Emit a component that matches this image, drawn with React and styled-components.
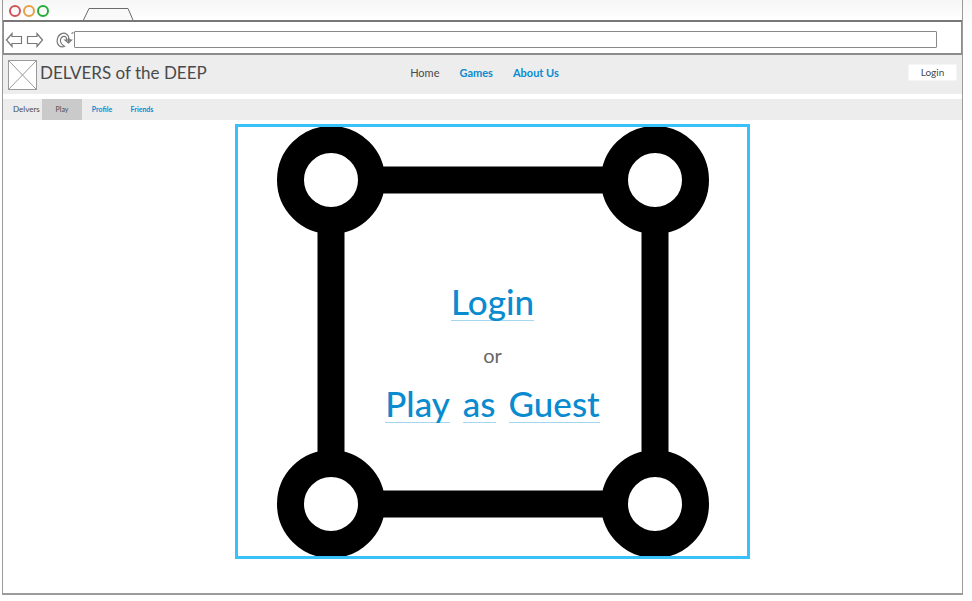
import React from "react";
import styled, { createGlobalStyle } from "styled-components";

const GlobalStyle = createGlobalStyle`
  *, *::before, *::after { box-sizing: border-box; }
  body {
    margin: 0;
    background: linear-gradient(#f7f7f7, #ffffff 28px) no-repeat #ffffff;
    font-family: Lato, "Open Sans", sans-serif;
    color: #4a4a4a;
  }
  button, input { font-family: inherit; color: inherit; }
  a { color: #0a8bd0; text-decoration: none; }
`;

const BrowserFrame = styled.div`
  display: flex;
  flex-direction: column;
  min-height: calc(100vh - 6px);
  margin: 0 9px 6px 2px;
  border: solid #9b9b9b;
  border-width: 0 1px 2px;
  background: #ffffff;
`;

const TabStrip = styled.div`
  display: flex;
  align-items: flex-end;
  justify-content: flex-start;
  gap: 34px;
  height: 22px;
  padding-left: 6px;
  border-bottom: 2px solid #777777;
  background: linear-gradient(#f6f6f6, #ffffff);
`;

const WindowControls = styled.div`
  display: flex;
  gap: 2px;
  padding-bottom: 3px;
`;

const WindowDot = styled.button`
  width: 12px;
  height: 12px;
  padding: 0;
  border: 2px solid ${({ $color }) => $color};
  border-radius: 50%;
  background: transparent;
`;

const TabShape = styled.svg`
  display: block;
  width: 51px;
  height: 13px;
  fill: #f9f9f9;
  stroke: #6b6b6b;
`;

const AddressBar = styled.div`
  display: flex;
  align-items: center;
  height: 33px;
  padding: 4px 24px 0 1px;
  border: solid #8c8c8c;
  border-width: 0 1px 2px;
`;

const ToolButton = styled.button`
  display: flex;
  margin: 0 ${({ $gap }) => $gap || 0}px 0 0;
  padding: 0;
  border: 0;
  background: transparent;

  svg {
    width: 18px;
    height: 16px;
    fill: none;
    stroke: #777777;
    stroke-width: 1.2;
  }
`;

const AddressInput = styled.input`
  flex: 1;
  min-width: 0;
  height: 17px;
  padding: 0 4px;
  border: 1px solid #888888;
  border-radius: 1px;
  background: #ffffff;
  font-size: 11px;
`;

const SiteHeader = styled.header`
  display: grid;
  grid-template-columns: 1fr auto 1fr;
  align-items: center;
  height: 39px;
  padding: 0 5px;
  background: #ededed;
`;

const Brand = styled.div`
  display: flex;
  align-items: center;
  gap: 3px;
`;

const LogoPlaceholder = styled.svg`
  width: 29px;
  height: 30px;
  fill: #ffffff;
  stroke: #9a9a9a;
`;

const SiteTitle = styled.h1`
  margin: 0;
  padding-bottom: 4px;
  font-size: 17px;
  line-height: 20px;
  font-weight: 400;
  white-space: nowrap;
`;

const MainNav = styled.nav`
  display: flex;
  gap: 20px;
  padding: 0 0 4px 4px;
  font-size: 11px;
  line-height: 14px;
`;

const NavLink = styled.a`
  color: ${({ $current }) => ($current ? "#4a4a4a" : "#0a8bd0")};
  font-weight: ${({ $current }) => ($current ? 400 : 700)};
  white-space: nowrap;
`;

const LoginButton = styled.button`
  justify-self: end;
  width: 49px;
  height: 17px;
  margin-bottom: 4px;
  padding: 0 0 2px;
  border: 1px solid #f5f5f5;
  border-radius: 1px;
  background: #ffffff;
  font-size: 10px;
  line-height: 14px;
`;

const SubNav = styled.nav`
  display: flex;
  align-items: stretch;
  height: 21px;
  margin-top: 5px;
  padding-left: 10px;
  background: #ededed;
  line-height: 21px;
`;

const SubNavTitle = styled.span`
  width: 29px;
  font-size: 8px;
  white-space: nowrap;
`;

const SubNavLink = styled.a`
  width: 40px;
  background: ${({ $current }) => ($current ? "#cacaca" : "transparent")};
  color: ${({ $current }) => ($current ? "#4a4a4a" : "#0a8bd0")};
  font-size: 7px;
  font-weight: ${({ $current }) => ($current ? 400 : 700)};
  text-align: center;
`;

const Main = styled.main`
  display: flex;
  justify-content: center;
  padding: 4px 0 20px 20px;
`;

const GamePanel = styled.section`
  display: grid;
  justify-items: center;
  width: 100%;
  max-width: 515px;
  border: 3px solid #38c1fa;
  background: #ffffff;

  > * { grid-area: 1 / 1; }
`;

const Board = styled.svg`
  display: block;
  width: 432px;
  max-width: 100%;
  height: auto;
`;

const Choices = styled.div`
  display: flex;
  flex-direction: column;
  align-items: center;
  align-self: center;
  padding-top: 22px;
`;

const ChoiceLink = styled.a`
  display: flex;
  gap: 13px;
  font-size: 35px;
  line-height: 38px;
  font-weight: 500;
`;

const Word = styled.span`
  border-bottom: 1px solid #a5d6ef;
`;

const Divider = styled.p`
  margin: 21px 0 16px;
  font-size: 20px;
  line-height: 26px;
  color: #666666;
`;

const ARROW = "M1.5 8 L7 1.5 V4.5 H16.5 V11.5 H7 V14.5 Z";
const RING_CENTRES = [
  [54, 54],
  [378, 54],
  [54, 378],
  [378, 378],
];

const Choice = ({ text }) => (
  <ChoiceLink href="#" aria-label={text}>
    {text.split(" ").map((word) => (
      <Word key={word}>{word}</Word>
    ))}
  </ChoiceLink>
);

export default function App() {
  return (
    <>
      <GlobalStyle />
      <BrowserFrame>
        <TabStrip>
          <WindowControls>
            <WindowDot $color="#cf5358" aria-label="Close" />
            <WindowDot $color="#e5a044" aria-label="Minimise" />
            <WindowDot $color="#27ad35" aria-label="Maximise" />
          </WindowControls>
          <TabShape viewBox="0 0 51 13" aria-hidden="true">
            <path d="M0.5 13 L6 1.5 H45 L50 13" />
          </TabShape>
        </TabStrip>

        <AddressBar>
          <ToolButton $gap={3} aria-label="Back">
            <svg viewBox="0 0 18 16">
              <path d={ARROW} />
            </svg>
          </ToolButton>
          <ToolButton $gap={12} aria-label="Forward">
            <svg viewBox="0 0 18 16">
              <path d={ARROW} transform="translate(18 0) scale(-1 1)" />
            </svg>
          </ToolButton>
          <ToolButton aria-label="Reload">
            <svg viewBox="0 0 18 16">
              <path d="M8.5 14.5 C4 16 .5 12.5 1.2 8 C2 2 7.5 -.5 11 2.5 C12.8 4 13.2 6 13 8 H15.5 L12.5 11 L9 8 H10.8 C10.6 5.5 9.5 4 7.5 4.4 C5 5 4 7.5 4.6 10 C5 12 6.5 13 8.5 14.5 Z" />
              <path d="M12.5 6 V10.5 M10 8 H15 M15.5 1.5 L17.5 .5" />
            </svg>
          </ToolButton>
          <AddressInput type="text" aria-label="Address" />
        </AddressBar>

        <SiteHeader>
          <Brand>
            <LogoPlaceholder viewBox="0 0 29 30" aria-hidden="true">
              <rect x="0.5" y="0.5" width="28" height="29" />
              <path d="M1 1 L28 29 M28 1 L1 29" />
            </LogoPlaceholder>
            <SiteTitle>DELVERS of the DEEP</SiteTitle>
          </Brand>
          <MainNav aria-label="Main">
            <NavLink href="#" $current aria-current="page">Home</NavLink>
            <NavLink href="#">Games</NavLink>
            <NavLink href="#">About Us</NavLink>
          </MainNav>
          <LoginButton>Login</LoginButton>
        </SiteHeader>

        <SubNav aria-label="Delvers">
          <SubNavTitle>Delvers</SubNavTitle>
          <SubNavLink href="#" $current aria-current="page">Play</SubNavLink>
          <SubNavLink href="#">Profile</SubNavLink>
          <SubNavLink href="#">Friends</SubNavLink>
        </SubNav>

        <Main>
          <GamePanel>
            <Board viewBox="0 1 432 429" aria-hidden="true">
              <rect x="54" y="54" width="324" height="324" fill="none" stroke="#000" strokeWidth="27" />
              {RING_CENTRES.map(([x, y]) => (
                <circle key={`${x}-${y}`} cx={x} cy={y} r="40.5" fill="#fff" stroke="#000" strokeWidth="27" />
              ))}
            </Board>
            <Choices>
              <Choice text="Login" />
              <Divider>or</Divider>
              <Choice text="Play as Guest" />
            </Choices>
          </GamePanel>
        </Main>
      </BrowserFrame>
    </>
  );
}
